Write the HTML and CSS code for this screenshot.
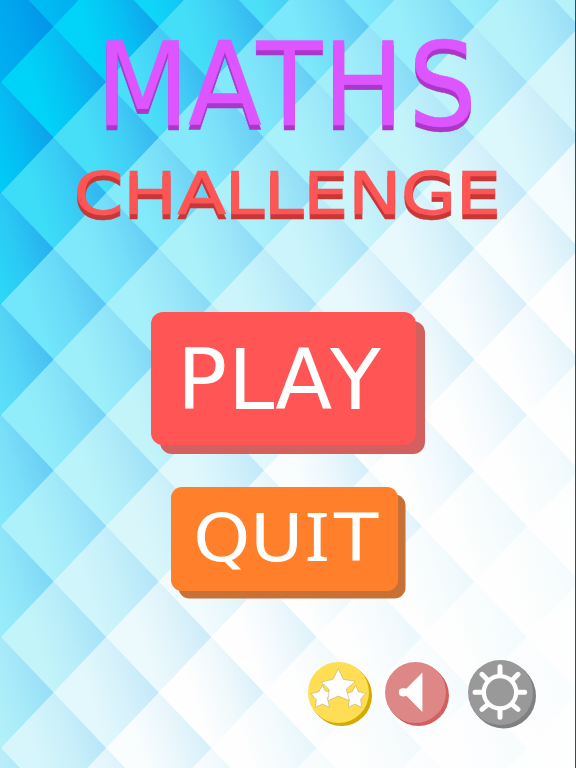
FILE: index.html
```
<!DOCTYPE html>
<html lang="en">
<head>
    <meta charset="UTF-8">
    <meta name="viewport" content="width=device-width, initial-scale=1.0">
    <title>Maths Challenge</title>
    <link rel="stylesheet" href="styles.css">
</head>
<body>
    <canvas class="background" id="background" width="576" height="768"></canvas>
    <main class="menu">
        <h1 class="title">
            <svg width="456" height="210" viewBox="60 25 456 210">
                <g class="maths" transform="scale(0.925 1)">
                    <text class="maths-shadow" x="104 203.2 277.2 348.9 441.4" y="130.5">MATHS</text>
                    <text x="104 203.2 277.2 348.9 441.4" y="124.8" aria-hidden="true">MATHS</text>
                </g>
                <g class="challenge" transform="scale(1.22 1)">
                    <text class="challenge-shadow" x="60.2 100.8 145.2 184.1 216.1 248.3 285.2 328.4 373.5" y="219">CHALLENGE</text>
                    <text x="60.2 100.8 145.2 184.1 216.1 248.3 285.2 328.4 373.5" y="214.5" aria-hidden="true">CHALLENGE</text>
                </g>
            </svg>
        </h1>
        <button type="button" class="btn play">
            <svg width="265" height="133" viewBox="151 312.5 265 133">
                <text x="177.1 228.1 275.3 330.1" y="409.3">PLAY</text>
            </svg>
        </button>
        <button type="button" class="btn quit">
            <svg width="227" height="104" viewBox="171 487 227 104">
                <g transform="scale(1.1 1)">
                    <text x="175.7 227.4 277 303.7" y="560.7">QU<tspan class="letter-i">I</tspan>T</text>
                </g>
            </svg>
        </button>
        <nav class="icons">
            <button type="button" class="icon scores" aria-label="Scores">
                <svg viewBox="24 37 183 183">
                    <path d="M67 106L76 124L99 128L83 143L88 173L67 163L46 173L49 150L33 132L57 126Z"/>
                    <path d="M167 106L175 126L197 131L182 149L185 173L165 163L145 173L148 150L133 134L157 126Z"/>
                    <path d="M115 57L130 89L166 95L139 119L148 153L115 139L83 154L88 120L64 97L99 89Z"/>
                </svg>
            </button>
            <button type="button" class="icon sound" aria-label="Sound">
                <svg viewBox="255 39 181 181">
                    <path d="M366 70L319 118L308 117A12 12 0 0 0 308 141L319 140L366 187Z"/>
                </svg>
            </button>
            <button type="button" class="icon settings" aria-label="Settings">
                <svg viewBox="504 30 195 195">
                    <circle cx="600" cy="127" r="48.5"/>
                    <path d="M600 75V50M600 179V202M548 127H525M652 127H674M563 90L546 73M637 90L654 73M563 164L546 178M637 164L654 178"/>
                </svg>
            </button>
        </nav>
    </main>
    <script>
        const canvas = document.getElementById("background");
        const ctx = canvas.getContext("2d");

        // half size of one diamond
        const HALF_W = 52.6;
        const HALF_H = 55.5;

        const lightStops = [
            [0, 0, 170, 240], [134, 0, 212, 248], [247, 68, 222, 248], [360, 124, 232, 251],
            [470, 152, 238, 250], [574, 180, 242, 250], [750, 212, 246, 251], [900, 236, 250, 253],
            [1100, 254, 254, 254]
        ];
        const darkStops = [
            [0, 0, 146, 232], [134, 16, 164, 236], [247, 54, 182, 240], [360, 98, 202, 244],
            [470, 124, 214, 246], [574, 152, 222, 247], [750, 184, 230, 248], [900, 204, 235, 249],
            [1100, 218, 240, 250], [1300, 228, 245, 251], [1500, 238, 249, 252], [2100, 252, 254, 254]
        ];

        function colorAt(stops, u) {
            if (u <= stops[0][0]) return stops[0].slice(1);
            for (let i = 1; i < stops.length; i++) {
                if (u <= stops[i][0]) {
                    const a = stops[i - 1];
                    const b = stops[i];
                    const t = (u - a[0]) / (b[0] - a[0]);
                    return [1, 2, 3].map(n => a[n] + (b[n] - a[n]) * t);
                }
            }
            return stops[stops.length - 1].slice(1);
        }

        function rgb(c) {
            return `rgb(${c.map(Math.round).join(",")})`;
        }

        for (let j = -1; j < 15; j++) {
            for (let k = -1; k < 13; k++) {
                if ((j + k) % 2 !== 0) continue;
                const x = 1 + k * HALF_W;
                const y = 27 + j * HALF_H;
                const px = Math.max(x, 0);
                const py = Math.max(y, 0);
                const u = px + py * 0.82 + px * py * 0.0023;
                const light = colorAt(lightStops, u);
                const dark = colorAt(darkStops, u);
                const middle = light.map((v, n) => v + (dark[n] - v) * 0.4);
                // tilted upwards, the upper right edge is the darker one
                const fill = ctx.createLinearGradient(x - 46, y + 15, x + 46, y - 15);
                fill.addColorStop(0, rgb(light));
                fill.addColorStop(0.3, rgb(light));
                fill.addColorStop(0.65, rgb(middle));
                fill.addColorStop(1, rgb(dark));
                ctx.fillStyle = fill;
                ctx.beginPath();
                ctx.moveTo(x - HALF_W - 0.5, y);
                ctx.lineTo(x, y - HALF_H - 0.5);
                ctx.lineTo(x + HALF_W + 0.5, y);
                ctx.lineTo(x, y + HALF_H + 0.5);
                ctx.fill();
            }
        }
    </script>
</body>
</html>
```
FILE: styles.css
```
* {
    box-sizing: border-box;
}
body {
    margin: 0;
    width: 576px;
    height: 768px;
    overflow: hidden;
    font-family: "DejaVu Sans", Verdana, sans-serif;
    background: white;
}
.background {
    position: absolute;
    top: 0;
    left: 0;
    z-index: -1;
}
.menu {
    display: flex;
    flex-direction: column;
    height: 768px;
    padding-top: 25px;
    border-right: 1px solid #2c4a7c;
}
svg {
    display: block;
}
.title {
    margin: 0 0 77.4px 60px;
    font-weight: normal;
}
.maths {
    font-size: 116.6px;
    fill: #dd55ff;
    stroke: #dd55ff;
    stroke-width: 0.5px;
}
.maths-shadow {
    fill: #aa37c8;
    stroke: #aa37c8;
}
.challenge {
    font-size: 59px;
    fill: #ff5555;
    stroke: #ff5555;
    stroke-width: 0.6px;
}
.challenge-shadow {
    fill: #c83737;
    stroke: #c83737;
}
button {
    padding: 0;
    border: none;
    font-family: inherit;
}
.btn text {
    fill: white;
}
.play {
    width: 265px;
    height: 133px;
    margin-left: 151px;
    border-radius: 12px;
    background: #ff5555;
    box-shadow: 9px 9px 0 #d35f5f;
    font-size: 83.2px;
}
.quit {
    width: 227px;
    height: 104px;
    margin: 41.5px 0 0 171px;
    border-radius: 11px;
    background: #ff7f2a;
    box-shadow: 7.5px 7.5px 0 #c87137;
    font-size: 65.8px;
}
.letter-i {
    font-family: "Noto Sans", sans-serif;
    font-size: 67.2px;
}
.icons {
    display: flex;
    align-items: center;
    margin: 69px 0 0 308px;
}
.icon {
    width: 61px;
    height: 61px;
    border-radius: 50%;
}
.icon path {
    fill: white;
}
.scores {
    background: #ffdd55;
    box-shadow: 1px 1px 0 #d4aa00, 2px 2px 0 #d4aa00, 3px 3px 0 #d4aa00;
}
.scores path {
    stroke: #b3a36a;
    stroke-width: 1.5;
}
.sound {
    margin-left: 16px;
    background: #de8787;
    box-shadow: 1px 1px 0 #d35f5f, 2px 2px 0 #d35f5f, 3px 3px 0 #d35f5f;
}
.settings {
    width: 65px;
    height: 65px;
    margin-left: 22px;
    background: #999999;
    box-shadow: 1px 1px 0 #808080, 2px 2px 0 #808080, 3px 3.5px 0 #808080;
}
.settings circle,
.settings path {
    fill: none;
    stroke: white;
    stroke-width: 13;
    stroke-linecap: round;
}
.settings path {
    stroke-width: 15;
}
```
